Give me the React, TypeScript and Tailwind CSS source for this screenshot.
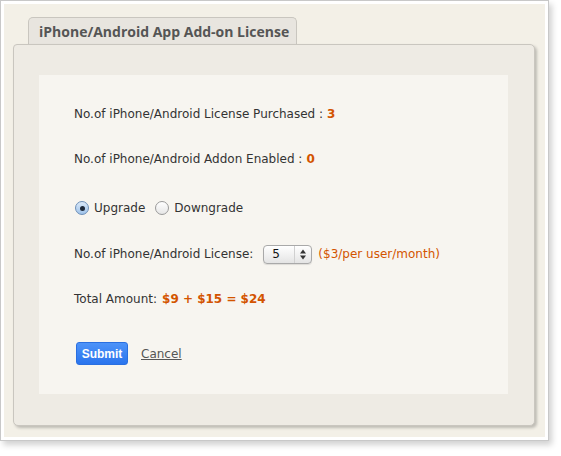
import React from "react";

const font = { fontFamily: '"DejaVu Sans", Verdana, sans-serif' };

const Radio = ({ checked, label }: { checked: boolean; label: string }) => (
  <label className="flex items-center gap-[5px]">
    <span
      className={`flex h-[14px] w-[14px] items-center justify-center rounded-full border ${
        checked
          ? "border-[#6d8fb8] bg-gradient-to-b from-[#dbe9f8] to-[#9fc3ea]"
          : "border-[#9a9a9a] bg-gradient-to-b from-white to-[#e6e6e6]"
      }`}
    >
      {checked && <span className="h-[5px] w-[5px] rounded-full bg-[#1e2a3a]" />}
    </span>
    <span>{label}</span>
  </label>
);

export default function App() {
  return (
    <div className="h-[456px] w-[561px] bg-white" style={font}>
      <div className="h-[441px] w-[549px] border border-[#c8c8c8] bg-white p-[3px] shadow-[3px_4px_6px_rgba(0,0,0,0.18)]">
        <div className="flex h-full flex-col bg-[#f3f0e7] pl-[9px] pt-[13px]">
          {/* tab */}
          <div className="ml-[15px] flex h-[27px] w-[269px] items-center whitespace-nowrap rounded-t-[5px] border border-b-0 border-[#c9c6bf] bg-[#e8e5df] pl-[10px] font-['Open_Sans',sans-serif] text-[14px] font-bold text-[#555]">
            iPhone/Android App Add-on License
          </div>

          {/* panel */}
          <div className="flex h-[382px] w-[522px] rounded-[5px] rounded-tl-[4px] border border-[#c9c6bf] bg-[#eeebe4] pb-[31px] pl-[25px] pr-[26px] pt-[30px] shadow-[2px_2px_3px_rgba(0,0,0,0.22)]">
            <div className="flex flex-1 flex-col bg-[#f7f5f0] pl-[35px] pt-[29px] text-[12px] text-[#333]">
              <div className="flex h-[20px] items-center">
                No.of iPhone/Android License Purchased :
                <span className="ml-[4px] font-bold text-[#d35400]">3</span>
              </div>

              <div className="mt-[25px] flex h-[20px] items-center">
                No.of iPhone/Android Addon Enabled :
                <span className="ml-[4px] font-bold text-[#d35400]">0</span>
              </div>

              <div className="mt-[29px] flex h-[20px] items-center gap-[10px] pl-[1px]">
                <Radio checked label="Upgrade" />
                <Radio checked={false} label="Downgrade" />
              </div>

              <div className="mt-[26px] flex h-[20px] items-center">
                <span>No.of iPhone/Android License:</span>
                <div className="ml-[10px] flex h-[19px] w-[49px] items-center rounded-[4px] border border-[#a9a9a9] bg-gradient-to-b from-white to-[#e4e4e4] shadow-[0_1px_1px_rgba(0,0,0,0.1)]">
                  <span className="w-[32px] pl-[8px] text-[12px] text-[#111]">5</span>
                  <span className="h-full w-px bg-[#d0d0d0]" />
                  <svg width="16" height="17" viewBox="0 0 16 17" className="shrink-0">
                    <path d="M5 7.5 L8 3.5 L11 7.5 Z" fill="#333" />
                    <path d="M5 9.5 L8 13.5 L11 9.5 Z" fill="#333" />
                  </svg>
                </div>
                <span className="ml-[6px] text-[#d35400]">($3/per user/month)</span>
              </div>

              <div className="mt-[25px] flex h-[20px] items-center">
                Total Amount:
                <span className="ml-[5px] font-bold text-[#d35400]">$9 + $15 = $24</span>
              </div>

              <div className="mt-[33px] flex items-center">
                <button className="ml-[2px] h-[23px] w-[52px] rounded-[3px] border border-[#2a6fe0] bg-gradient-to-b from-[#4d93f8] to-[#2a74ee] font-['Liberation_Sans',sans-serif] text-[12px] font-bold text-white">
                  Submit
                </button>
                <a className="ml-[13px] text-[12px] text-[#555] underline">Cancel</a>
              </div>
            </div>
          </div>
        </div>
      </div>
    </div>
  );
}
